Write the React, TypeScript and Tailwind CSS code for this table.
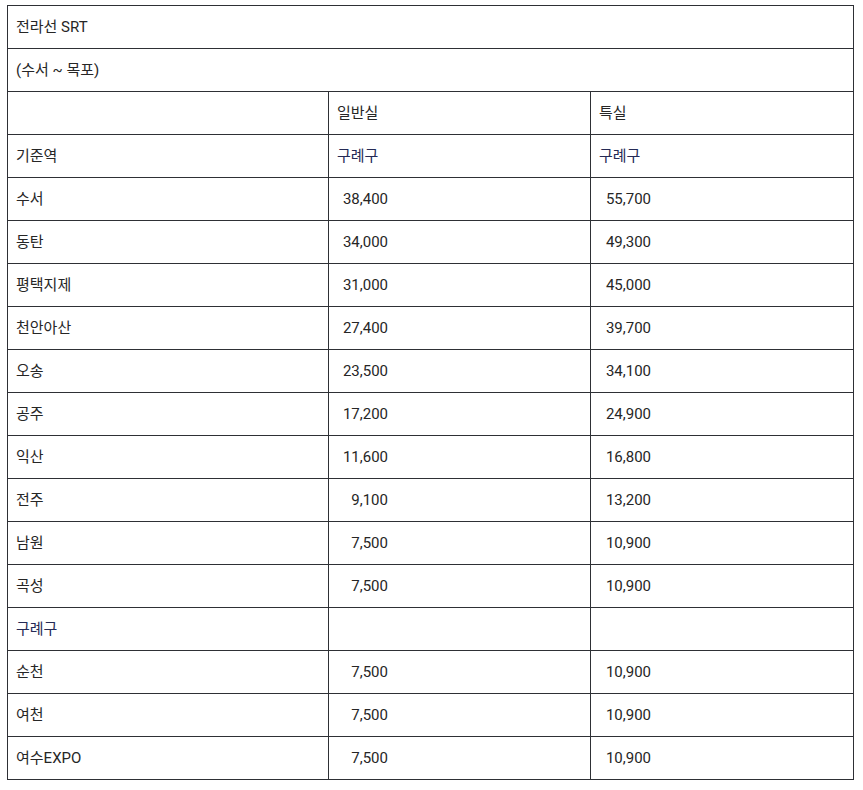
const ROWS: [string, string, string][] = [
  ["수서", "38,400", "55,700"],
  ["동탄", "34,000", "49,300"],
  ["평택지제", "31,000", "45,000"],
  ["천안아산", "27,400", "39,700"],
  ["오송", "23,500", "34,100"],
  ["공주", "17,200", "24,900"],
  ["익산", "11,600", "16,800"],
  ["전주", "9,100", "13,200"],
  ["남원", "7,500", "10,900"],
  ["곡성", "7,500", "10,900"],
];

const TAIL: [string, string, string][] = [
  ["순천", "7,500", "10,900"],
  ["여천", "7,500", "10,900"],
  ["여수EXPO", "7,500", "10,900"],
];

const cell = "border border-[#2e3035] h-[43px] px-2 align-middle";

function Fare({ rows }: { rows: [string, string, string][] }) {
  return (
    <>
      {rows.map(([name, normal, special]) => (
        <tr key={name}>
          <td className={cell}>{name}</td>
          <td className={cell}>
            <span className="inline-block w-[51px] text-right">{normal}</span>
          </td>
          <td className={cell}>
            <span className="inline-block w-[52px] text-right">{special}</span>
          </td>
        </tr>
      ))}
    </>
  );
}

export default function App() {
  return (
    <div className="bg-white min-h-screen pt-[5px] pl-[7px]" style={{ fontFamily: "Roboto, 'Noto Sans CJK KR', sans-serif" }}>
      <table className="border-collapse w-[846px] table-fixed text-[15px] text-[#262626]">
        <colgroup>
          <col className="w-[321px]" />
          <col className="w-[262px]" />
          <col className="w-[263px]" />
        </colgroup>
        <tbody>
          <tr>
            <td colSpan={3} className={cell}>전라선 SRT</td>
          </tr>
          <tr>
            <td colSpan={3} className={cell}>(수서 ~ 목포)</td>
          </tr>
          <tr>
            <td className={cell}></td>
            <td className={cell}>일반실</td>
            <td className={cell}>특실</td>
          </tr>
          <tr>
            <td className={cell}>기준역</td>
            <td className={`${cell} text-[#252a55]`}>구례구</td>
            <td className={`${cell} text-[#252a55]`}>구례구</td>
          </tr>
          <Fare rows={ROWS} />
          <tr>
            <td className={`${cell} text-[#252a55]`}>구례구</td>
            <td className={cell}></td>
            <td className={cell}></td>
          </tr>
          <Fare rows={TAIL} />
        </tbody>
      </table>
    </div>
  );
}
